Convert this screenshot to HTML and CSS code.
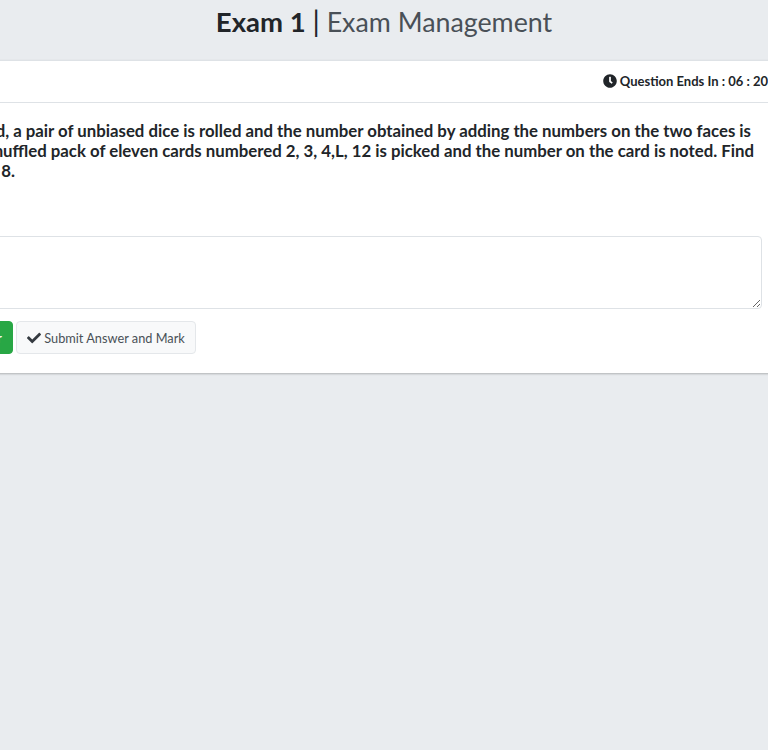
FILE: index.html
```html
<!DOCTYPE html>
<html lang="en">
<head>
    <meta charset="UTF-8">
    <meta name="viewport" content="width=device-width, initial-scale=1.0">
    <title>Exam 1 | Exam Management</title>
    <link rel="stylesheet" href="styles.css">
</head>
<body>
    <header class="page-title">
        <h3><strong>Exam 1</strong> <span class="bar">|</span> Exam Management</h3>
    </header>

    <div class="card">
        <div class="card-header">
            <span class="timer">
                <svg class="icon" viewBox="0 0 512 512"><path d="M256,8C119,8,8,119,8,256S119,504,256,504,504,393,504,256,393,8,256,8Zm92.49,313h0l-20,25a16,16,0,0,1-22.49,2.5h0l-67-49.72a40,40,0,0,1-15-31.23V112a16,16,0,0,1,16-16h32a16,16,0,0,1,16,16V256l58,42.5A16,16,0,0,1,348.49,321Z"/></svg>
                Question Ends In : 06 : 20
            </span>
        </div>
        <div class="card-body">
            <div class="question">
                <div class="line line-1"><span>In each round, a pair of unbiased dice is rolled and the number obtained by adding the numbers on the two faces is</span></div>
                <div class="line line-2"><span>noted. A card from a well shuffled pack of eleven cards numbered 2, 3, 4,L, 12 is picked and the number on the card is noted. Find</span></div>
                <div class="line line-3"><span>the probability that the sum is 8.</span></div>
            </div>
            <textarea class="answer"></textarea>
            <div class="actions">
                <button class="btn btn-success">Submit Answer</button>
                <button class="btn btn-light">
                    <svg class="icon" viewBox="0 0 512 512"><path d="M173.898 439.404l-166.4-166.4c-9.997-9.997-9.997-26.206 0-36.204l36.203-36.204c9.997-9.998 26.207-9.998 36.204 0L192 312.69 432.095 72.596c9.997-9.997 26.207-9.997 36.204 0l36.203 36.204c9.997 9.997 9.997 26.206 0 36.204l-294.4 294.401c-9.998 9.997-26.207 9.997-36.204-.001z"/></svg>
                    Submit Answer and Mark
                </button>
            </div>
        </div>
    </div>
</body>
</html>
```

FILE: styles.css
```css
html, body {
    overflow-x: hidden;
}

body {
    margin: 0;
    min-height: 750px;
    background: #e9ecef;
    color: #212529;
    font-family: Lato, "Noto Sans", sans-serif;
    font-size: 14px;
}

.page-title {
    height: 60px;
    text-align: center;
}

h3 {
    margin: 0;
    padding-top: 4px;
    font-size: 26.8px;
    font-weight: 400;
    line-height: 34px;
    color: #495057;
}

h3 strong {
    font-size: 27.5px;
    color: #212529;
}

.bar {
    font-size: 29px;
    color: #212529;
}

.card {
    margin: 0 -14px 0 -20px;
    background: #fff;
    box-shadow: 0 1px 2px rgba(0, 0, 0, 0.25);
    border-top: 1px solid #dee2e6;
}

.card-header {
    display: flex;
    justify-content: flex-end;
    height: 41px;
    border-bottom: 1px solid #dee2e6;
    white-space: nowrap;
}

.timer {
    display: block;
    margin-right: 14px;
    font-size: 13px;
    font-weight: 700;
    line-height: 41px;
}

.icon {
    width: 14px;
    height: 14px;
    fill: currentColor;
    vertical-align: -2px;
}

.card-body {
    padding: 18px 20px 19px;
}

.question {
    height: 115px;
    font-size: 16.8px;
    font-weight: 700;
    line-height: 20px;
}

.line {
    display: flex;
    justify-content: flex-end;
    white-space: nowrap;
}

.line-1 { padding-right: 11px; }
.line-2 { padding-right: 8px; }
.line-3 { padding-right: 747px; }

.answer {
    display: block;
    box-sizing: border-box;
    width: calc(100% + 20px);
    height: 73px;
    margin-left: -20px;
    padding: 6px 12px;
    background: #fff;
    border: 1px solid #dee2e6;
    border-radius: 4px;
}

.actions {
    display: flex;
    gap: 3px;
    margin: 12px 0 0 -87px;
}

.btn {
    height: 33px;
    padding: 0 10px;
    border-radius: 4px;
    font-family: inherit;
    font-size: 12.75px;
    white-space: nowrap;
}

.btn-success {
    width: 100px;
    padding-left: 0;
    text-align: right;
    background: #28a745;
    border: 1px solid #28a745;
    color: #fff;
}

.btn-light {
    background: #f8f9fa;
    border: 1px solid #e4e7ea;
    color: #495057;
}

.btn-light .icon {
    color: #343a40;
}
```
